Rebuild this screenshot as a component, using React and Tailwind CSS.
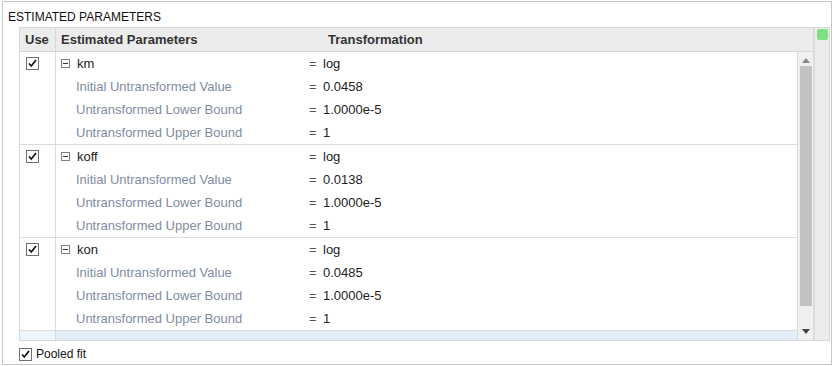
import React from 'react';

const groups = [
  { name: 'km', init: '0.0458', lower: '1.0000e-5', upper: '1' },
  { name: 'koff', init: '0.0138', lower: '1.0000e-5', upper: '1' },
  { name: 'kon', init: '0.0485', lower: '1.0000e-5', upper: '1' },
];

function Check({ className = '' }) {
  return (
    <div className={`w-[13px] h-[13px] border border-[#707070] bg-white flex items-center justify-center ${className}`}>
      <svg width="11" height="11" viewBox="0 0 11 11">
        <path d="M2 5.5 L4.3 8 L9 2" fill="none" stroke="#111" strokeWidth="1.7" />
      </svg>
    </div>
  );
}

function Minus() {
  return (
    <div className="w-[9px] h-[9px] border border-[#808080] flex items-center justify-center">
      <div className="w-[5px] h-px bg-[#333]" />
    </div>
  );
}

function Row({ label, value, top, check }) {
  return (
    <div className="h-[23px] flex items-center">
      <div className="w-[36px] h-full border-r border-[#dcdcdc] flex items-center pl-[6px]">
        {check && <Check />}
      </div>
      <div className="w-[253px] flex items-center pl-[5px] h-full">
        {top ? (
          <>
            <Minus />
            <span className="ml-[7px] text-[#222]">{label}</span>
          </>
        ) : (
          <span className="ml-[15px] text-[#7f8ca1]">{label}</span>
        )}
      </div>
      <span className="w-[14px] text-[#555]">=</span>
      <span className="text-[#222]">{value}</span>
    </div>
  );
}

export default function App() {
  return (
    <div className="w-[836px] h-[366px] bg-white font-['Liberation_Sans',Arial,sans-serif] text-[12px] pt-px pl-[2px]">
      <div className="w-[830px] h-[364px] border border-[#c6c6c6] flex flex-col">
        <div className="h-[25px] pl-[5px] pt-[6px] text-[#111]">ESTIMATED PARAMETERS</div>
        <div className="ml-[16px] w-[811px] flex border-t border-b border-l border-r border-[#d6d6d6] text-[13px]">
          <div className="w-[793px] flex flex-col">
            <div className="h-[24px] bg-[#ececec] border-b border-[#d6d6d6] flex items-center font-bold text-[#333]">
              <div className="w-[36px] h-full border-r border-[#d6d6d6] flex items-center pl-[5px]">Use</div>
              <div className="w-[272px] pl-[5px]">Estimated Parameters</div>
              <div>Transformation</div>
            </div>
            <div className="flex h-[288px] overflow-hidden">
              <div className="w-[777px] flex flex-col">
                {groups.map((g) => (
                  <div key={g.name} className="border-b border-[#dcdcdc]">
                    <Row top check label={g.name} value="log" />
                    <Row label="Initial Untransformed Value" value={g.init} />
                    <Row label="Untransformed Lower Bound" value={g.lower} />
                    <Row label="Untransformed Upper Bound" value={g.upper} />
                  </div>
                ))}
                <div className="flex h-[9px]">
                  <div className="w-[36px] bg-[#eef5fc] border-r border-[#dcdcdc]" />
                  <div className="flex-1 bg-[#e1eefa]" />
                </div>
              </div>
              <div className="w-[16px] bg-[#f0f0f0] border-l border-[#dcdcdc] flex flex-col items-center pt-[6px] pb-[6px]">
                <svg width="8" height="5" viewBox="0 0 8 5"><path d="M4 0 L8 5 L0 5 Z" fill="#888" /></svg>
                <div className="mt-[3px] w-[12px] h-[240px] bg-[#c2c2c2]" />
                <div className="flex-1" />
                <svg width="8" height="5" viewBox="0 0 8 5"><path d="M0 0 L8 0 L4 5 Z" fill="#444" /></svg>
              </div>
            </div>
          </div>
          <div className="flex-1 bg-[#ececec] border-l-2 border-[#dcdcdc] pt-px pl-[2px]">
            <div className="w-[11px] h-[11px] rounded-[2px] bg-[#7fe07f]" />
          </div>
        </div>
        <div className="flex items-center ml-[16px] mt-[4px]">
          <Check />
          <span className="ml-[4px] text-[#111]">Pooled fit</span>
        </div>
      </div>
    </div>
  );
}
